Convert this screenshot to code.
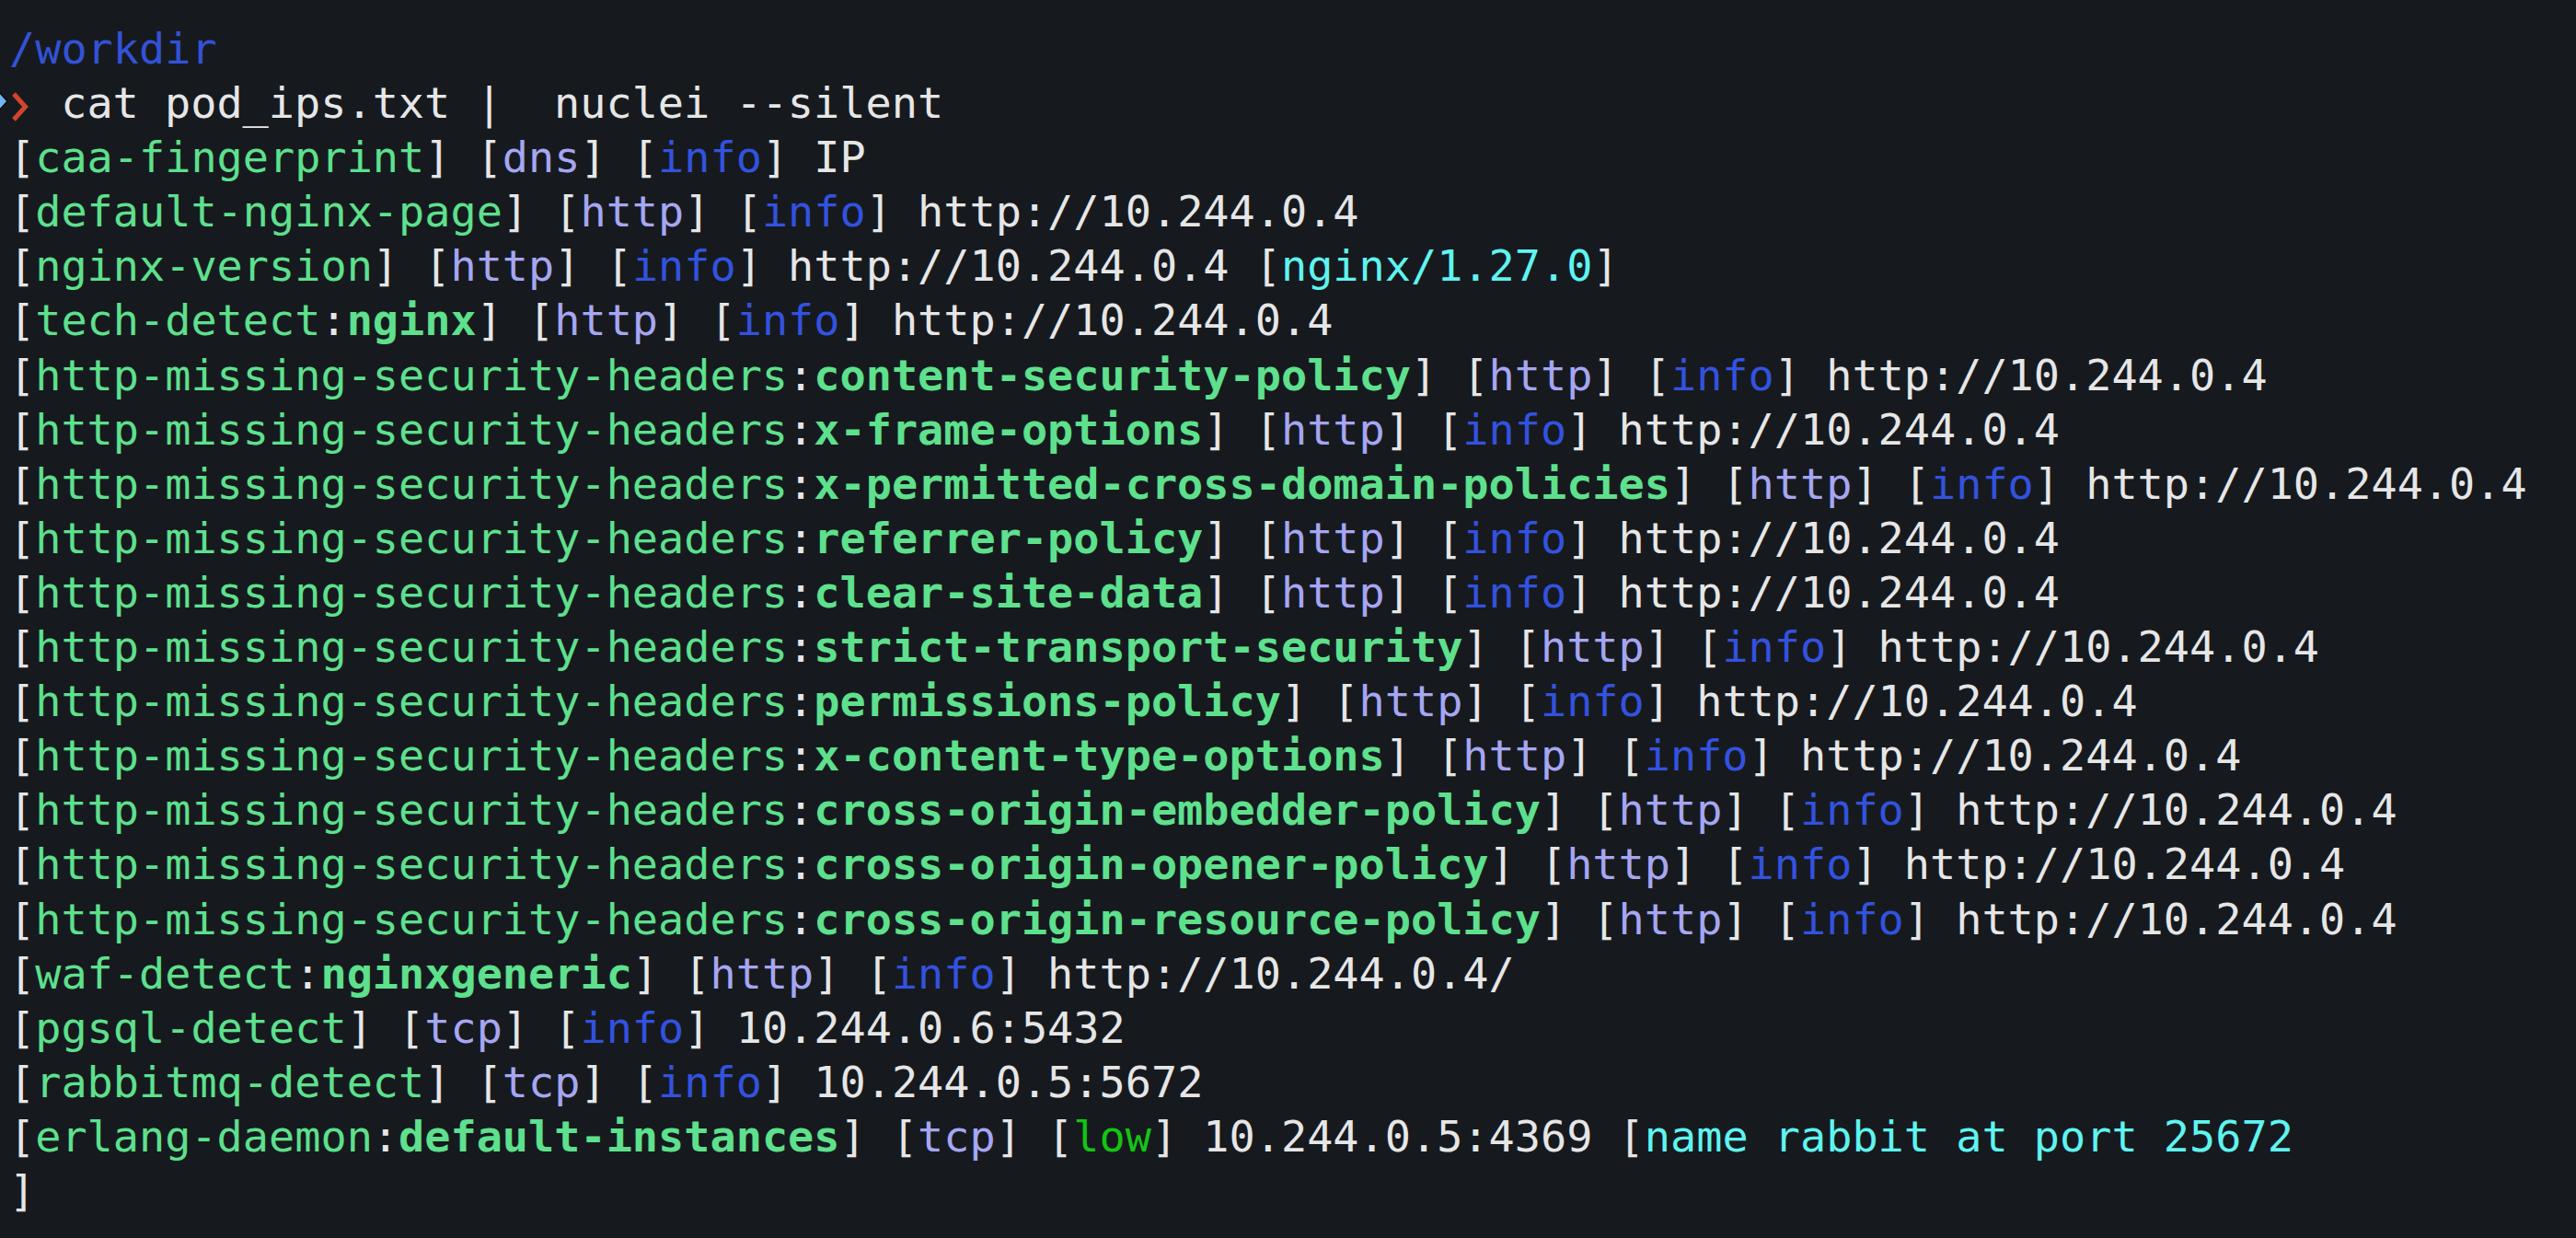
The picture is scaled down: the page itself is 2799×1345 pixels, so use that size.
type Seg = [string, string]

const COLORS: Record<string, string> = {
  w: "text-[#e6e6e6]",
  g: "text-[#5ee08d]",
  gb: "text-[#5ee08d] font-bold",
  t: "text-[#a6a6f2]",
  i: "text-[#3352df]",
  l: "text-[#14c414]",
  c: "text-[#5ff4f0]",
  p: "text-[#3352d6]",
}

const URL = "http://10.244.0.4"

function result(id: string, matcher: string | null, type: string, sev: string, target: string, extra: Seg[] = []): Seg[] {
  const segs: Seg[] = [["w", "["], ["g", id]]
  if (matcher) segs.push(["w", ":"], ["gb", matcher])
  segs.push(
    ["w", "] ["], ["t", type], ["w", "] ["],
    [sev === "low" ? "l" : "i", sev],
    ["w", "] " + target],
  )
  return segs.concat(extra)
}

const MSH = "http-missing-security-headers"

const LINES: Seg[][] = [
  result("caa-fingerprint", null, "dns", "info", "IP"),
  result("default-nginx-page", null, "http", "info", URL),
  result("nginx-version", null, "http", "info", URL, [["w", " ["], ["c", "nginx/1.27.0"], ["w", "]"]]),
  result("tech-detect", "nginx", "http", "info", URL),
  result(MSH, "content-security-policy", "http", "info", URL),
  result(MSH, "x-frame-options", "http", "info", URL),
  result(MSH, "x-permitted-cross-domain-policies", "http", "info", URL),
  result(MSH, "referrer-policy", "http", "info", URL),
  result(MSH, "clear-site-data", "http", "info", URL),
  result(MSH, "strict-transport-security", "http", "info", URL),
  result(MSH, "permissions-policy", "http", "info", URL),
  result(MSH, "x-content-type-options", "http", "info", URL),
  result(MSH, "cross-origin-embedder-policy", "http", "info", URL),
  result(MSH, "cross-origin-opener-policy", "http", "info", URL),
  result(MSH, "cross-origin-resource-policy", "http", "info", URL),
  result("waf-detect", "nginxgeneric", "http", "info", URL + "/"),
  result("pgsql-detect", null, "tcp", "info", "10.244.0.6:5432"),
  result("rabbitmq-detect", null, "tcp", "info", "10.244.0.5:5672"),
  result("erlang-daemon", "default-instances", "tcp", "low", "10.244.0.5:4369", [["w", " ["], ["c", "name rabbit at port 25672"]]),
  [["w", "]"]],
]

function Prompt() {
  return (
    <svg width="38" height="59" viewBox="0 0 38 59" className="inline-block align-top ml-[-10px]">
      <polygon points="-2,16 8,27 -2,38" fill="#6fb6f2" stroke="#0b0d10" strokeWidth="1.5" />
      <polyline points="15,19 27.5,33 15,47" fill="none" stroke="#d2452c" strokeWidth="5" strokeLinejoin="miter" />
    </svg>
  )
}

export default function App() {
  return (
    <div className="h-[1345px] w-full overflow-hidden bg-[#161a1f] pl-[10px] pt-[24px] font-['DejaVu_Sans_Mono',monospace] text-[46.85px] leading-[59.1px] whitespace-pre">
      <div className="h-[59.1px] text-[#3352d6]">/workdir</div>
      <div className="h-[59.1px] text-[#e6e6e6]">
        <Prompt />
        <span> cat pod_ips.txt |  nuclei --silent</span>
      </div>
      {LINES.map((line, idx) => (
        <div key={idx} className="h-[59.1px]">
          {line.map(([color, text], j) => (
            <span key={j} className={COLORS[color]}>{text}</span>
          ))}
        </div>
      ))}
    </div>
  )
}
